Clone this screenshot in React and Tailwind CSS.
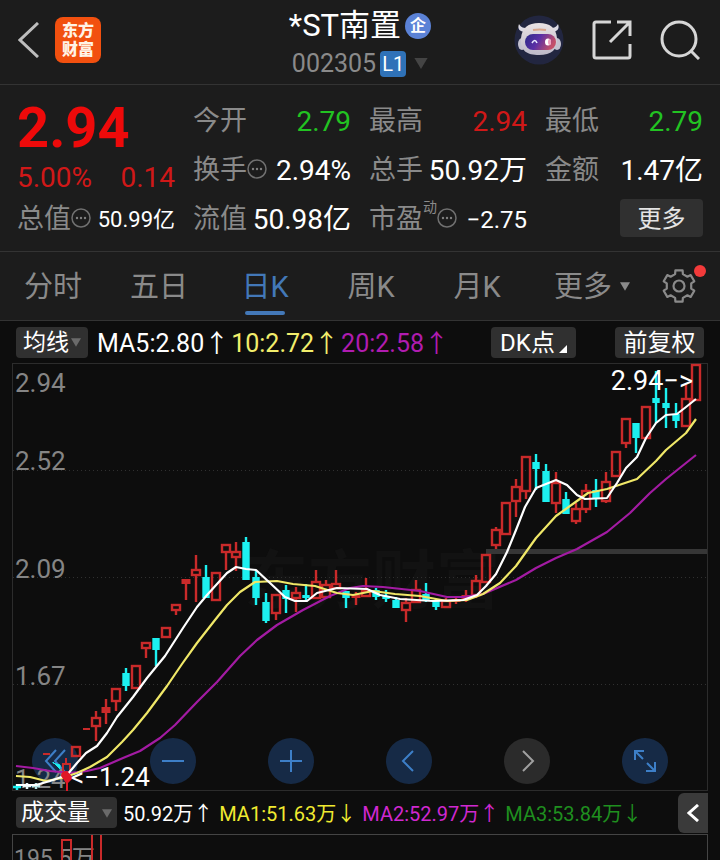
import React from "react";

const UP = "#c92a2a";
const DOWN = "#1cf0f0";

// x centre, body top, body bottom, wick top, wick bottom, kind
// kind: "u" hollow rise, "f" filled rise, "d" fall
const CANDLES = [
  [76, 746, 757, 746, 757, "u"],
  [96, 717, 727, 711, 741, "u"],
  [106, 707, 713, 699, 724, "f"],
  [116, 688, 702, 688, 711, "u"],
  [126, 673, 686, 668, 691, "d"],
  [136, 665, 689, 665, 689, "u"],
  [146, 642, 649, 642, 658, "u"],
  [156, 638, 650, 638, 666, "d"],
  [166, 627, 638, 627, 638, "u"],
  [176, 604, 611, 604, 615, "u"],
  [186, 579, 584, 579, 600, "f"],
  [196, 569, 576, 555, 602, "u"],
  [206, 577, 598, 565, 598, "d"],
  [216, 572, 601, 572, 601, "u"],
  [226, 544, 553, 544, 570, "u"],
  [236, 551, 558, 542, 571, "u"],
  [246, 542, 580, 537, 580, "d"],
  [256, 577, 598, 571, 605, "d"],
  [266, 602, 621, 593, 623, "d"],
  [276, 594, 614, 594, 620, "u"],
  [286, 590, 599, 585, 613, "d"],
  [296, 592, 599, 587, 612, "u"],
  [306, 595, 598, 584, 600, "d"],
  [316, 581, 599, 570, 599, "u"],
  [326, 584, 598, 580, 598, "u"],
  [336, 583, 589, 570, 589, "u"],
  [346, 591, 598, 591, 608, "d"],
  [356, 595, 598, 592, 605, "f"],
  [366, 590, 597, 578, 597, "u"],
  [376, 590, 597, 588, 600, "d"],
  [386, 596, 599, 590, 602, "d"],
  [396, 600, 608, 597, 608, "d"],
  [406, 602, 611, 598, 622, "u"],
  [416, 589, 603, 580, 603, "u"],
  [426, 594, 600, 583, 602, "d"],
  [436, 601, 607, 599, 610, "d"],
  [446, 600, 608, 598, 608, "u"],
  [456, 599, 602, 596, 604, "f"],
  [466, 595, 600, 590, 602, "f"],
  [476, 580, 596, 575, 598, "u"],
  [486, 554, 583, 554, 583, "u"],
  [496, 529, 546, 527, 549, "u"],
  [506, 502, 535, 502, 535, "u"],
  [516, 486, 502, 479, 517, "u"],
  [526, 456, 492, 456, 499, "u"],
  [536, 462, 469, 454, 490, "d"],
  [546, 471, 502, 464, 502, "d"],
  [556, 482, 504, 472, 513, "u"],
  [566, 499, 514, 492, 514, "d"],
  [576, 508, 522, 503, 524, "u"],
  [586, 490, 510, 484, 513, "u"],
  [596, 490, 499, 479, 507, "d"],
  [606, 481, 502, 472, 503, "u"],
  [616, 451, 477, 451, 477, "u"],
  [626, 418, 444, 418, 448, "u"],
  [636, 423, 438, 423, 453, "d"],
  [646, 406, 439, 406, 439, "u"],
  [656, 398, 403, 371, 423, "d"],
  [666, 403, 408, 388, 428, "d"],
  [676, 414, 421, 403, 428, "d"],
  [686, 398, 427, 385, 427, "u"],
  [696, 364, 401, 364, 401, "u"],
];

const MA5 =
  "16,785 36,785 50,781 67,775 77,763 86,753 97,746 107,733 117,717 133,697 147,678 165,656 183,628 197,607 207,595 217,584 227,573 236,567 246,569 256,570 270,583 285,597 295,601 307,601 317,593 337,588 367,589 380,595 400,599 433,601 463,600 477,595 486,586 496,574 507,552 516,530 525,507 536,488 556,480 567,485 577,495 585,499 607,498 617,483 626,468 637,457 646,438 656,423 666,415 677,414 686,407 696,399";
const MA10 =
  "16,776 30,777 46,781 62,778 77,773 90,767 107,757 122,742 133,730 147,713 167,686 182,664 197,643 215,620 227,605 240,592 255,582 277,581 293,584 315,586 337,593 353,595 373,591 395,594 420,596 447,601 467,600 483,594 500,583 516,566 536,538 556,516 577,501 588,493 607,489 637,479 656,461 666,450 686,433 696,419";
const MA20 =
  "16,766 33,768 50,771 70,773 87,771 100,768 123,758 140,751 160,738 175,725 197,702 217,682 240,656 257,640 277,625 303,610 330,596 350,588 363,586 383,587 420,591 447,597 463,597 483,594 516,580 536,568 556,558 577,549 607,532 630,513 650,493 666,479 696,455";

function Candle({ x, top, bottom, high, low, kind }) {
  if (kind === "u") {
    return (
      <g stroke={UP} strokeWidth="2.4" fill="none">
        {high < top && <line x1={x} x2={x} y1={high} y2={top} />}
        {low > bottom && <line x1={x} x2={x} y1={bottom} y2={low} />}
        <rect x={x - 4} y={top + 1} width="8" height={bottom - top - 2} />
      </g>
    );
  }
  const color = kind === "d" ? DOWN : UP;
  return (
    <g fill={color}>
      <rect x={x - 1.2} y={high} width="2.4" height={low - high} />
      <rect x={x - (kind === "d" ? 3.7 : 4.5)} y={top} width={kind === "d" ? 7.4 : 9} height={bottom - top} />
    </g>
  );
}

function Cross({ x, y, color }) {
  return <path d={`M${x - 4} ${y}h8M${x} ${y - 3}v6`} stroke={color} strokeWidth="2.5" />;
}

function More() {
  return (
    <svg className="mt-[-3px] h-5 w-5 shrink-0" viewBox="0 0 20 20" fill="none" aria-hidden="true">
      <circle cx="10" cy="10" r="9" stroke="#707070" strokeWidth="1.5" />
      <g fill="#808080">
        <circle cx="6" cy="10" r="1.2" />
        <circle cx="10" cy="10" r="1.2" />
        <circle cx="14" cy="10" r="1.2" />
      </g>
    </svg>
  );
}

function Caret({ className }) {
  return (
    <svg className={className} viewBox="0 0 12 10" aria-hidden="true">
      <path d="M0 0h12L6 10z" fill="currentColor" />
    </svg>
  );
}

function Robot() {
  return (
    <svg className="h-[50px] w-[50px]" viewBox="0 0 50 50" aria-hidden="true">
      <defs>
        <linearGradient id="visor" x1="0" x2="1" y1="0" y2="0.3">
          <stop offset="0" stopColor="#2c2a86" />
          <stop offset="0.5" stopColor="#5a2fa6" />
          <stop offset="1" stopColor="#c4506a" />
        </linearGradient>
        <linearGradient id="shell" x1="0" x2="0" y1="0" y2="1">
          <stop offset="0" stopColor="#e9e2e4" />
          <stop offset="1" stopColor="#bdb9c8" />
        </linearGradient>
      </defs>
      <circle cx="25" cy="25" r="24.5" fill="#222640" />
      <path d="M12 17C6 17 3 14 5 9c2 4 5 4 9 4zM37 17c6 0 9-3 7-8-2 4-5 4-9 4z" fill="#dcdae4" />
      <ellipse cx="8" cy="29" rx="4" ry="6" fill="#c3c1cf" />
      <ellipse cx="43" cy="29" rx="4" ry="6" fill="#c3c1cf" />
      <path d="M25 8c11 0 17 5 18 15 1 12-6 17-18 17S6 36 7 23C8 13 14 8 25 8z" fill="url(#shell)" />
      <path d="M19 15q7-1 13 0" stroke="#d9a58c" strokeWidth="2" fill="none" />
      <rect x="11" y="19" width="31" height="16" rx="8" fill="url(#visor)" />
      <path d="M18 28q3-5 5 0" stroke="#e8e8ff" strokeWidth="1.6" fill="none" />
      <ellipse cx="34" cy="27" rx="3" ry="3.5" fill="#fff" />
      <ellipse cx="35.5" cy="27" rx="1.5" ry="3" fill="#f0a0c0" />
    </svg>
  );
}

function gearPath() {
  const points = [];
  for (let i = 0; i < 6; i++) {
    const mid = i * 60 - 90;
    [
      [-18, 12.5],
      [-13, 16],
      [13, 16],
      [18, 12.5],
    ].forEach(([offset, r]) => {
      const a = ((mid + offset) * Math.PI) / 180;
      points.push(`${(18 + r * Math.cos(a)).toFixed(1)} ${(18 + r * Math.sin(a)).toFixed(1)}`);
    });
  }
  return `M${points.join("L")}Z`;
}

function Quote({ label, mark, info, value, color = "text-white", size = "text-[28px]" }) {
  return (
    <div className="flex items-center justify-between pt-1 whitespace-nowrap">
      <span className="flex items-center text-[27px] text-[#8a8a8a]">
        {label}
        {mark && <span className="self-start text-sm leading-4">{mark}</span>}
        {info && <More />}
      </span>
      <span className={`${size} ${color}`}>{value}</span>
    </div>
  );
}

function NavButton({ label, muted, children }) {
  return (
    <button
      type="button"
      aria-label={label}
      className={`flex h-[46px] w-[46px] items-center justify-center rounded-full ${
        muted ? "bg-[#2b2b2b] text-[#a0a0a0]" : "bg-[#1c3a66]/65 text-[#3d7fc8]"
      }`}
    >
      <svg className="h-[26px] w-[26px]" viewBox="0 0 26 26" fill="none" stroke="currentColor" strokeWidth="2">
        {children}
      </svg>
    </button>
  );
}

const TABS = ["分时", "五日", "日K", "周K", "月K"];

export default function App() {
  return (
    <div className="flex h-screen flex-col overflow-hidden bg-[#0d0d0d] font-[Roboto,'Noto_Sans_CJK_SC',sans-serif] text-white">
      <header className="grid h-[85px] shrink-0 grid-cols-[1fr_auto_1fr] items-center border-b border-[#333] bg-[#1c1c1c] px-[18px]">
        <div className="flex items-center gap-4 pb-1">
          <button type="button" aria-label="返回">
            <svg className="h-9 w-[21px]" viewBox="0 0 21 36" fill="none" stroke="#bdbdbd" strokeWidth="3">
              <path d="M20 1L2 18l18 17" />
            </svg>
          </button>
          <div className="flex h-[46px] w-[46px] flex-col items-center justify-center rounded-lg bg-[#f2500f] text-base leading-[19px] font-black text-[#fff3e6]">
            <span>东方</span>
            <span>财富</span>
          </div>
        </div>
        <div className="flex flex-col items-center pt-[3px]">
          <h1 className="flex items-center gap-1 text-[31px] leading-10">
            *ST南置
            <span className="flex h-[26px] w-[26px] items-center justify-center rounded-full bg-[#5b82d6] text-base font-bold">
              企
            </span>
          </h1>
          <div className="flex items-center gap-1 text-[25px] leading-9 text-[#8a8a8a]">
            002305
            <span className="rounded-sm bg-[#2f72b8] px-[2px] text-xl leading-[26px] text-white">L1</span>
            <Caret className="ml-1 h-[11px] w-[14px] text-[#444]" />
          </div>
        </div>
        <div className="flex items-center justify-end gap-7 pr-[2px] pb-1">
          <Robot />
          <button type="button" aria-label="分享">
            <svg className="h-10 w-10" viewBox="0 0 40 40" fill="none" stroke="#d6d6d6" strokeWidth="3">
              <path d="M19 2H4a2 2 0 0 0-2 2v32a2 2 0 0 0 2 2h32a2 2 0 0 0 2-2V24M25 2h13v14M38 2L18 22" />
            </svg>
          </button>
          <button type="button" aria-label="搜索">
            <svg className="h-10 w-10" viewBox="0 0 40 40" fill="none" stroke="#d6d6d6" strokeWidth="3">
              <circle cx="19" cy="19" r="17" />
              <path d="M31 31l8 8" />
            </svg>
          </button>
        </div>
      </header>

      <section className="grid shrink-0 grid-cols-4 grid-rows-[repeat(3,49px)] gap-x-[18px] border-b border-[#333] bg-[#1c1c1c] px-[17px] pt-[10px] pb-[9px]">
        <div className="row-span-2 flex flex-col pt-[1px]">
          <strong className="text-[56px] leading-[64px] font-bold text-[#ee0a0a]">2.94</strong>
          <div className="flex justify-between text-[28px] leading-9 text-[#d01818]">
            <span>5.00%</span>
            <span>0.14</span>
          </div>
        </div>
        <Quote label="今开" value="2.79" color="text-[#22c322]" />
        <Quote label="最高" value="2.94" color="text-[#d01818]" />
        <Quote label="最低" value="2.79" color="text-[#22c322]" />
        <Quote label="换手" info value="2.94%" />
        <Quote label="总手" value="50.92万" />
        <Quote label="金额" value="1.47亿" />
        <Quote label="总值" info value="50.99亿" size="text-[22px]" />
        <Quote label="流值" value="50.98亿" />
        <Quote label="市盈" mark="动" info value="−2.75" size="text-2xl" />
        <button type="button" className="h-[38px] w-[83px] self-center justify-self-end rounded-sm bg-[#303030] pt-[2px] text-2xl text-[#e4e4e4]">
          更多
        </button>
      </section>

      <nav className="grid h-[69px] shrink-0 grid-cols-[106fr_106fr_106fr_106fr_106fr_124fr_66fr] border-b border-[#333] bg-[#1c1c1c] text-[29px] text-[#8a8a8a]">
        {TABS.map((tab) => (
          <button
            key={tab}
            type="button"
            className={`relative pt-1 ${tab === "日K" ? "text-[#4378b8]" : ""}`}
          >
            {tab}
            {tab === "日K" && (
              <span className="absolute bottom-[5px] left-1/2 h-1 w-10 -translate-x-1/2 rounded-full bg-[#4378b8]" />
            )}
          </button>
        ))}
        <button type="button" className="flex items-center justify-center gap-2 pt-1">
          更多
          <Caret className="-mt-1 h-[9px] w-[10px]" />
        </button>
        <button type="button" aria-label="设置" className="flex items-center justify-center pr-4">
          <span className="relative">
            <svg className="h-9 w-9" viewBox="0 0 36 36" fill="none" stroke="#8a8a8a" strokeWidth="2.2" strokeLinejoin="round">
              <path d={gearPath()} />
              <circle cx="18" cy="18" r="5.5" />
            </svg>
            <span className="absolute -top-[3px] -right-[9px] h-3 w-3 rounded-full bg-[#f23a3a]" />
          </span>
        </button>
      </nav>

      <div className="flex h-[42px] shrink-0 items-center px-4 text-[25px] whitespace-nowrap">
        <button type="button" className="mr-[9px] flex h-[31px] w-[72px] items-center justify-center gap-[2px] rounded-sm bg-[#303030] pt-[2px] text-[23px]">
          均线
          <Caret className="-mt-[2px] h-[9px] w-[10px] text-[#6a6a6a]" />
        </button>
        <div className="flex gap-[2px] pt-[3px]">
          <span>MA5:2.80↑</span>
          <span className="text-[#f2ee6c]">10:2.72↑</span>
          <span className="text-[#b01cb0]">20:2.58↑</span>
        </div>
        <button type="button" className="ml-auto flex h-[31px] w-[85px] items-center justify-center gap-1 rounded-sm bg-[#303030] pt-[2px] text-2xl">
          DK点
          <svg className="mt-3 h-2 w-2" viewBox="0 0 8 8" aria-hidden="true">
            <path d="M8 0v8H0z" fill="#fff" />
          </svg>
        </button>
        <button type="button" className="ml-[39px] h-[31px] w-[89px] rounded-sm bg-[#303030] pt-[2px] text-2xl leading-[29px]">
          前复权
        </button>
      </div>

      <main className="relative mx-3 shrink-0">
        <div className="absolute inset-x-5 bottom-[7px] flex justify-between">
          <NavButton label="最早">
            <path d="M14 2L4 13l10 11M23 2L13 13l10 11" />
          </NavButton>
          <NavButton label="缩小">
            <path d="M2 13h22" />
          </NavButton>
          <NavButton label="放大">
            <path d="M2 13h22M13 2v22" />
          </NavButton>
          <NavButton label="向左">
            <path d="M17 3L7 13l10 10" />
          </NavButton>
          <NavButton label="向右" muted>
            <path d="M9 3l10 10L9 23" />
          </NavButton>
          <div className="pr-5">
            <NavButton label="全屏">
              <path d="M3 12V3h9M3 3l8 8M23 14v9h-9M23 23l-8-8" />
            </NavButton>
          </div>
        </div>
        <svg className="pointer-events-none relative block h-auto w-full" viewBox="12 363 696 428" overflow="visible" role="img" aria-label="日K线图">
          <rect x="12.5" y="363.5" width="695" height="427" fill="none" stroke="#2c2c2c" />
          <text x="244" y="603" fontSize="64" fontWeight="700" fill="#121212">
            东方财富
          </text>
          <g stroke="#303030" strokeDasharray="1 3">
            <path d="M13 470.5H707M13 577.5H707M13 684.5H707" />
          </g>
          <rect x="486" y="549" width="221" height="5" fill="#363636" />
          <g fontSize="26" fill="#858585">
            <text x="15" y="392">2.94</text>
            <text x="15" y="470">2.52</text>
            <text x="15" y="578">2.09</text>
            <text x="15" y="685">1.67</text>
            <text x="15" y="788">1.24</text>
          </g>
          {CANDLES.map(([x, top, bottom, high, low, kind]) => (
            <Candle key={x} x={x} top={top} bottom={bottom} high={high} low={low} kind={kind} />
          ))}
          <path d="M43 754h7M83 729h7" stroke={UP} strokeWidth="2" />
          <path d="M53 762l7 7v-4l-7-2z" fill={DOWN} stroke={DOWN} />
          <path d="M63 764h7v8h-7zM66 758v6" stroke={UP} strokeWidth="2" fill="none" />
          <Cross x={17} y={787} color={DOWN} />
          <Cross x={27} y={786} color="#e8f8f8" />
          <Cross x={36} y={786} color="#b8e8e8" />
          <g fill="none" strokeWidth="2.2" strokeLinejoin="round">
            <polyline points={MA20} stroke="#a31ba3" />
            <polyline points={MA10} stroke="#f0e868" />
            <polyline points={MA5} stroke="#fff" />
          </g>
          <path d="M66 791v-8l-5-7c0-5 5-6 8-3l4 5-5 5v8z" fill="#e01826" />
          <g fontSize="26" fill="#fff">
            <text x="71" y="786">&lt;−1.24</text>
            <text x="693" y="390" textAnchor="end" fontSize="27">2.94−&gt;</text>
          </g>
        </svg>
      </main>

      <div className="flex h-[43px] shrink-0 items-center pr-3 pl-4 text-xl whitespace-nowrap">
        <button type="button" className="mr-[6px] flex h-[31px] w-[101px] items-center justify-between rounded-sm bg-[#303030] px-[5px] pt-[2px] text-[23px]">
          成交量
          <Caret className="h-[9px] w-[10px] text-[#6a6a6a]" />
        </button>
        <div className="flex gap-[6px] pt-[3px]">
          <span>50.92万↑</span>
          <span className="text-[#f0ea30]">MA1:51.63万↓</span>
          <span className="text-[#d028d0]">MA2:52.97万↑</span>
          <span className="text-[#1f8f1f]">MA3:53.84万↓</span>
        </div>
        <button type="button" aria-label="展开" className="ml-auto flex h-10 w-[30px] items-center justify-center rounded-l-md bg-[#3a3a3a]">
          <svg className="h-[18px] w-3" viewBox="0 0 12 18" fill="none" stroke="#fff" strokeWidth="3">
            <path d="M11 1L2 9l9 8" />
          </svg>
        </button>
      </div>

      <section className="mx-3 min-h-0 flex-1 overflow-hidden border border-b-0 border-[#444]">
        <svg className="block h-auto w-full" viewBox="13 835 694 60" role="img" aria-label="成交量图">
          <text x="14" y="866" fontSize="23" fill="#858585">
            195.5万
          </text>
          <path d="M62 900V840h9v60M92 835v60M101 835v60" fill="none" stroke={UP} strokeWidth="2" />
        </svg>
      </section>
    </div>
  );
}
